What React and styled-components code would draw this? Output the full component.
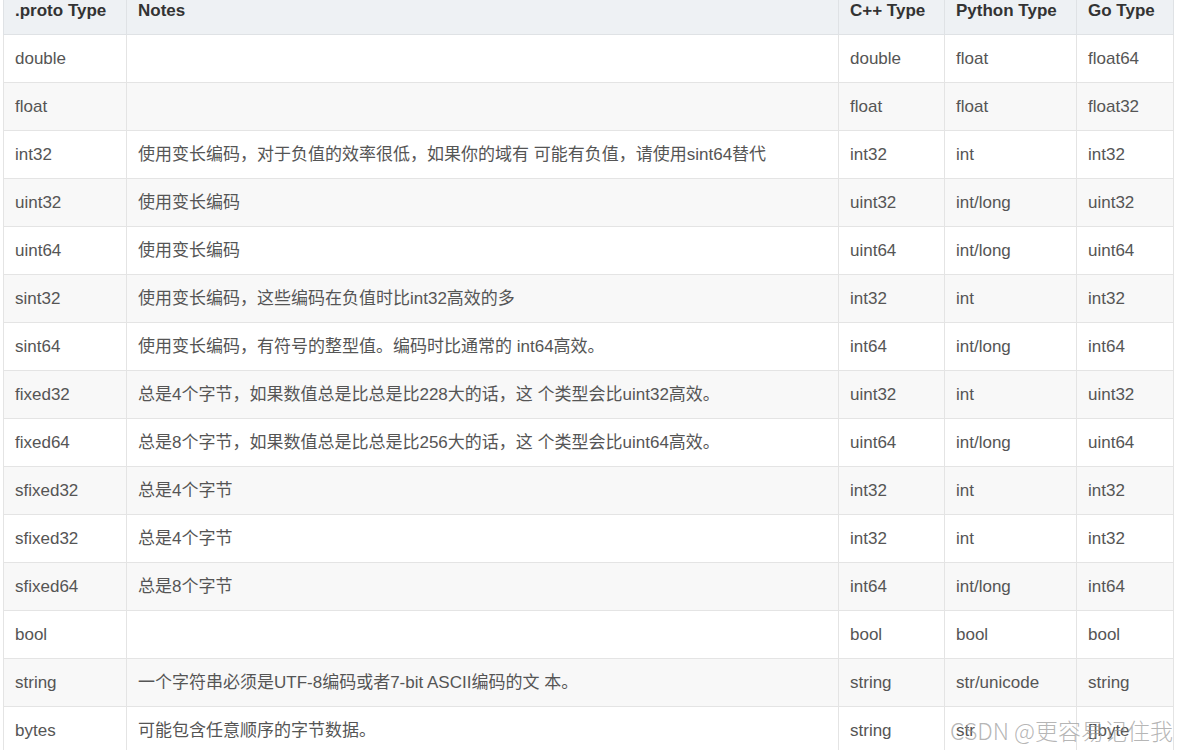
import React from "react";
import styled, { createGlobalStyle } from "styled-components";

const Global = createGlobalStyle`
  html, body { margin: 0; padding: 0; background: #fff; }
  body { overflow: hidden; }
`;

const Page = styled.div`
  position: relative;
  width: 1177px;
  height: 750px;
  overflow: hidden;
  padding-left: 3px;
  box-sizing: border-box;
  font-family: "Liberation Sans", Arial, "Noto Sans CJK SC", sans-serif;
`;

const Table = styled.table`
  border-collapse: collapse;
  table-layout: fixed;
  width: 1170px;
  font-size: 17px;
  color: #555;
`;

const Head = styled.th`
  height: 34px;
  padding: 0 11px;
  line-height: 22px;
  vertical-align: top;
  text-align: left;
  font-weight: bold;
  color: #333;
  background: #eef1f4;
  border: 1px solid #dfe2e5;
  border-top: none;
  white-space: nowrap;
`;

const Row = styled.tr`
  background: ${(p) => (p.$alt ? "#f8f8f8" : "#ffffff")};
`;

const Cell = styled.td`
  height: 48px;
  padding: 1px 11px 0;
  line-height: 20px;
  vertical-align: middle;
  border: 1px solid #e4e4e4;
  white-space: nowrap;
  overflow: hidden;
  box-sizing: border-box;
`;

const Watermark = styled.div`
  position: absolute;
  right: 4px;
  bottom: 6px;
  font-family: "Noto Sans CJK SC", sans-serif;
  font-weight: 300;
  font-size: 23px;
  line-height: 28px;
  color: rgba(150, 150, 150, 0.7);
  pointer-events: none;
  white-space: nowrap;
`;

const rows = [
  ["double", "", "double", "float", "float64"],
  ["float", "", "float", "float", "float32"],
  ["int32", "使用变长编码，对于负值的效率很低，如果你的域有 可能有负值，请使用sint64替代", "int32", "int", "int32"],
  ["uint32", "使用变长编码", "uint32", "int/long", "uint32"],
  ["uint64", "使用变长编码", "uint64", "int/long", "uint64"],
  ["sint32", "使用变长编码，这些编码在负值时比int32高效的多", "int32", "int", "int32"],
  ["sint64", "使用变长编码，有符号的整型值。编码时比通常的 int64高效。", "int64", "int/long", "int64"],
  ["fixed32", "总是4个字节，如果数值总是比总是比228大的话，这 个类型会比uint32高效。", "uint32", "int", "uint32"],
  ["fixed64", "总是8个字节，如果数值总是比总是比256大的话，这 个类型会比uint64高效。", "uint64", "int/long", "uint64"],
  ["sfixed32", "总是4个字节", "int32", "int", "int32"],
  ["sfixed32", "总是4个字节", "int32", "int", "int32"],
  ["sfixed64", "总是8个字节", "int64", "int/long", "int64"],
  ["bool", "", "bool", "bool", "bool"],
  ["string", "一个字符串必须是UTF-8编码或者7-bit ASCII编码的文 本。", "string", "str/unicode", "string"],
  ["bytes", "可能包含任意顺序的字节数据。", "string", "str", "[]byte"],
];

export default function App() {
  return (
    <Page>
      <Global />
      <Table>
        <colgroup>
          <col style={{ width: 123 }} />
          <col style={{ width: 712 }} />
          <col style={{ width: 106 }} />
          <col style={{ width: 132 }} />
          <col style={{ width: 97 }} />
        </colgroup>
        <thead>
          <tr>
            <Head>.proto Type</Head>
            <Head>Notes</Head>
            <Head>C++ Type</Head>
            <Head>Python Type</Head>
            <Head>Go Type</Head>
          </tr>
        </thead>
        <tbody>
          {rows.map((r, i) => (
            <Row key={i} $alt={i % 2 === 1}>
              {r.map((c, j) => (
                <Cell key={j}>{c}</Cell>
              ))}
            </Row>
          ))}
        </tbody>
      </Table>
      <Watermark>CSDN @更容易记住我</Watermark>
    </Page>
  );
}
